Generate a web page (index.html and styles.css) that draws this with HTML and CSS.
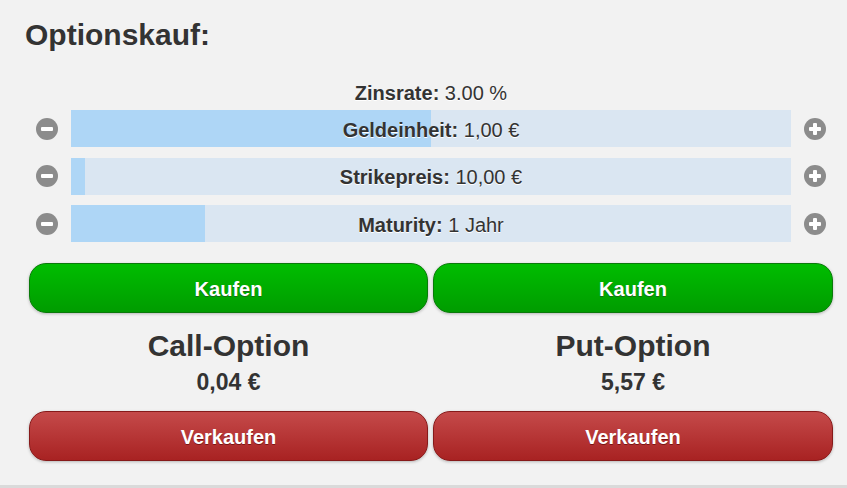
FILE: index.html
```html
<!DOCTYPE html>
<html lang="de">
<head>
  <meta charset="UTF-8">
  <meta name="viewport" content="width=device-width, initial-scale=1.0">
  <title>Optionskauf</title>
  <link rel="stylesheet" href="styles.css">
</head>
<body>
  <div class="page">
    <h1>Optionskauf:</h1>

    <div class="rate"><b>Zinsrate:</b> 3.00 %</div>

    <div class="sliders">
      <div class="slider-row">
        <button class="step-btn" aria-label="weniger">
          <svg width="22" height="22" viewBox="0 0 22 22"><circle cx="11" cy="11" r="11" fill="#8c8c8c"/><rect x="5" y="9" width="12" height="4" rx="1" fill="#fff"/></svg>
        </button>
        <div class="bar">
          <div class="bar-fill" style="width: 50%"></div>
          <span class="bar-label"><b>Geldeinheit:</b> 1,00 €</span>
        </div>
        <button class="step-btn" aria-label="mehr">
          <svg width="22" height="22" viewBox="0 0 22 22"><circle cx="11" cy="11" r="11" fill="#8c8c8c"/><rect x="5" y="9" width="12" height="4" rx="1" fill="#fff"/><rect x="9" y="5" width="4" height="12" rx="1" fill="#fff"/></svg>
        </button>
      </div>

      <div class="slider-row">
        <button class="step-btn" aria-label="weniger">
          <svg width="22" height="22" viewBox="0 0 22 22"><circle cx="11" cy="11" r="11" fill="#8c8c8c"/><rect x="5" y="9" width="12" height="4" rx="1" fill="#fff"/></svg>
        </button>
        <div class="bar">
          <div class="bar-fill" style="width: 2%"></div>
          <span class="bar-label"><b>Strikepreis:</b> 10,00 €</span>
        </div>
        <button class="step-btn" aria-label="mehr">
          <svg width="22" height="22" viewBox="0 0 22 22"><circle cx="11" cy="11" r="11" fill="#8c8c8c"/><rect x="5" y="9" width="12" height="4" rx="1" fill="#fff"/><rect x="9" y="5" width="4" height="12" rx="1" fill="#fff"/></svg>
        </button>
      </div>

      <div class="slider-row">
        <button class="step-btn" aria-label="weniger">
          <svg width="22" height="22" viewBox="0 0 22 22"><circle cx="11" cy="11" r="11" fill="#8c8c8c"/><rect x="5" y="9" width="12" height="4" rx="1" fill="#fff"/></svg>
        </button>
        <div class="bar">
          <div class="bar-fill" style="width: 18.6%"></div>
          <span class="bar-label"><b>Maturity:</b> 1 Jahr</span>
        </div>
        <button class="step-btn" aria-label="mehr">
          <svg width="22" height="22" viewBox="0 0 22 22"><circle cx="11" cy="11" r="11" fill="#8c8c8c"/><rect x="5" y="9" width="12" height="4" rx="1" fill="#fff"/><rect x="9" y="5" width="4" height="12" rx="1" fill="#fff"/></svg>
        </button>
      </div>
    </div>

    <div class="options">
      <div class="option">
        <button class="btn btn-buy">Kaufen</button>
        <h2>Call-Option</h2>
        <div class="price">0,04 €</div>
        <button class="btn btn-sell">Verkaufen</button>
      </div>
      <div class="option">
        <button class="btn btn-buy">Kaufen</button>
        <h2>Put-Option</h2>
        <div class="price">5,57 €</div>
        <button class="btn btn-sell">Verkaufen</button>
      </div>
    </div>
  </div>
</body>
</html>
```

FILE: styles.css
```css
:root {
  --text: #333;
  --bg: #f2f2f2;
  --track: #dae6f2;
  --fill: #aed6f6;
}

* {
  margin: 0;
  padding: 0;
  box-sizing: border-box;
  font-family: 'Liberation Sans', Arial, sans-serif;
}

body {
  background-color: var(--bg);
  color: var(--text);
}

.page {
  height: 488px;
  border-bottom: 3px solid #dadada;
  padding-top: 18px;
}

h1 {
  font-size: 30px;
  line-height: 34px;
  font-weight: bold;
  padding-left: 25px;
}

.rate {
  margin-top: 29px;
  padding: 0 56px 0 71px;
  font-size: 20px;
  line-height: 24px;
  text-align: center;
  text-shadow: 0 1px 0 #fff;
}

.sliders {
  margin-top: 5px;
  display: flex;
  flex-direction: column;
  gap: 10.5px;
  padding: 0 21px 0 36px;
}

.slider-row {
  display: flex;
  align-items: center;
  gap: 13px;
}

.step-btn {
  width: 22px;
  height: 22px;
  border: none;
  background: none;
  display: flex;
  cursor: pointer;
}

.bar {
  flex: 1;
  height: 37px;
  padding-top: 3px;
  background-color: var(--track);
  position: relative;
  display: flex;
  align-items: center;
  justify-content: center;
}

.bar-fill {
  position: absolute;
  left: 0;
  top: 0;
  bottom: 0;
  background-color: var(--fill);
}

.bar-label {
  position: relative;
  font-size: 20px;
  text-shadow: 0 1px 0 #fff;
}

.options {
  margin-top: 21px;
  display: grid;
  grid-template-columns: 399px 400px;
  gap: 5px;
  padding-left: 29px;
}

.option {
  display: flex;
  flex-direction: column;
  align-items: stretch;
  text-align: center;
}

.option h2 {
  margin-top: 15px;
  font-size: 30px;
  line-height: 36px;
}

.price {
  margin-top: 5px;
  font-size: 23px;
  line-height: 26px;
  font-weight: bold;
}

.btn {
  height: 50px;
  padding-top: 2px;
  border-radius: 17px;
  color: #fff;
  font-size: 20px;
  font-weight: bold;
  cursor: pointer;
  box-shadow: 0 1px 3px rgba(0, 0, 0, 0.25);
}

.btn-buy {
  background: linear-gradient(#00bd00, #009c00);
  border: 1px solid #0a7a0a;
  text-shadow: 0 1px 0 #1a6a1a;
}

.btn-sell {
  margin-top: 16px;
  background: linear-gradient(#c54a4a, #a82222);
  border: 1px solid #861a1a;
  text-shadow: 0 1px 0 #7a1414;
}
```
